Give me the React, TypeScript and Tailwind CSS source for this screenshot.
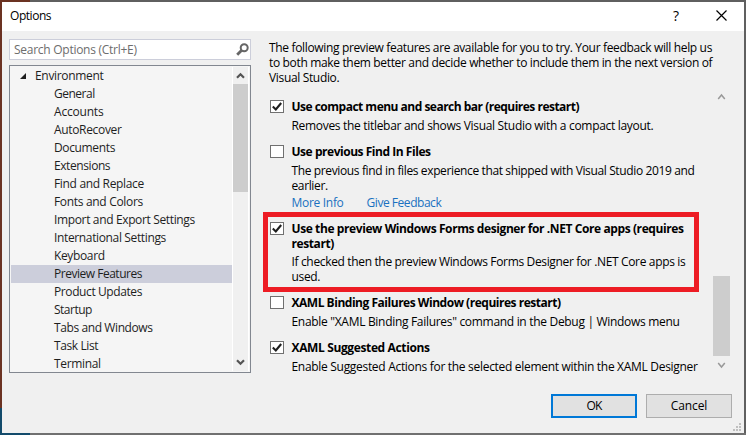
import React from "react";

type Line = { text: string; track: string };

const tree: Line[] = [
  { text: "General", track: "tracking-[-0.5px]" },
  { text: "Accounts", track: "tracking-[-0.2px]" },
  { text: "AutoRecover", track: "tracking-[-0.33px]" },
  { text: "Documents", track: "tracking-[-0.36px]" },
  { text: "Extensions", track: "tracking-[-0.42px]" },
  { text: "Find and Replace", track: "tracking-[-0.33px]" },
  { text: "Fonts and Colors", track: "tracking-[-0.32px]" },
  { text: "Import and Export Settings", track: "tracking-[-0.356px]" },
  { text: "International Settings", track: "tracking-[-0.36px]" },
  { text: "Keyboard", track: "tracking-[-0.36px]" },
  { text: "Preview Features", track: "tracking-[-0.48px]" },
  { text: "Product Updates", track: "tracking-[-0.4px]" },
  { text: "Startup", track: "tracking-[-0.5px]" },
  { text: "Tabs and Windows", track: "tracking-[-0.4px]" },
  { text: "Task List", track: "tracking-[-0.4px]" },
  { text: "Terminal", track: "tracking-[-0.33px]" },
];

type Feature = {
  checked: boolean;
  title: Line;
  body: Line;
  links?: boolean;
  height: string;
  bodyGap: string;
};

const features: Feature[] = [
  {
    checked: true,
    title: { text: "Use compact menu and search bar (requires restart)", track: "tracking-[-0.508px]" },
    body: {
      text: "Removes the titlebar and shows Visual Studio with a compact layout.",
      track: "tracking-[-0.311px]",
    },
    height: "h-[45px]",
    bodyGap: "pt-[4px]",
  },
  {
    checked: false,
    title: { text: "Use previous Find In Files", track: "tracking-[-0.463px]" },
    body: {
      text: "The previous find in files experience that shipped with Visual Studio 2019 and\nearlier.",
      track: "tracking-[-0.369px]",
    },
    links: true,
    height: "h-[77px]",
    bodyGap: "pt-[4px]",
  },
  {
    checked: true,
    title: {
      text: "Use the preview Windows Forms designer for .NET Core apps (requires\nrestart)",
      track: "tracking-[-0.406px]",
    },
    body: {
      text: "If checked then the preview Windows Forms Designer for .NET Core apps is\nused.",
      track: "tracking-[-0.345px]",
    },
    height: "h-[74px]",
    bodyGap: "pt-[3px]",
  },
  {
    checked: false,
    title: { text: "XAML Binding Failures Window (requires restart)", track: "tracking-[-0.475px]" },
    body: {
      text: 'Enable "XAML Binding Failures" command in the Debug | Windows menu',
      track: "tracking-[-0.307px]",
    },
    height: "h-[45px]",
    bodyGap: "pt-[4px]",
  },
  {
    checked: true,
    title: { text: "XAML Suggested Actions", track: "tracking-[-0.369px]" },
    body: {
      text: "Enable Suggested Actions for the selected element within the XAML Designer",
      track: "tracking-[-0.304px]",
    },
    height: "h-[45px]",
    bodyGap: "pt-[4px]",
  },
];

function Text({ line }: { line: Line }) {
  return <p className={`leading-[15px] whitespace-pre ${line.track}`}>{line.text}</p>;
}

function BoldChevron({ down }: { down?: boolean }) {
  return (
    <svg viewBox="0 0 9 7" className="h-[7px] w-[9px]" fill="none" stroke="#555" strokeWidth="2.2">
      <path d={down ? "M1 1.2 4.5 4.7 8 1.2" : "M1 5.8 4.5 2.3 8 5.8"} />
    </svg>
  );
}

function ThinChevron({ down }: { down?: boolean }) {
  return (
    <svg viewBox="0 0 9 7" className="h-[7px] w-[9px]" fill="none" stroke="#999" strokeWidth="1.5">
      <path d={down ? "M1.2 1 4.5 5 7.8 1" : "M1.2 6 4.5 2 7.8 6"} />
    </svg>
  );
}

function CheckBox({ checked }: { checked: boolean }) {
  return (
    <div className="h-[13px] w-[14px] shrink-0 border border-[#707070] bg-white">
      {checked && (
        <svg viewBox="0 0 12 11" className="block h-[11px] w-[12px]" fill="none" stroke="#1e1e1e" strokeWidth="2.1">
          <path d="M1.8 5.6 4.8 8.4 10.2 2" />
        </svg>
      )}
    </div>
  );
}

function FeatureRow({ f }: { f: Feature }) {
  return (
    <div className={`flex gap-[7.5px] ${f.height}`}>
      <div className="pt-px">
        <CheckBox checked={f.checked} />
      </div>
      <div className="min-w-0">
        <div className="font-bold">
          <Text line={f.title} />
        </div>
        <div className={f.bodyGap}>
          <Text line={f.body} />
        </div>
        {f.links && (
          <div className="flex gap-[23px] pt-[2px] leading-[15px] whitespace-nowrap text-[#1a70c0]">
            <a className="tracking-[-0.3px]">More Info</a>
            <a className="tracking-[-0.46px]">Give Feedback</a>
          </div>
        )}
      </div>
    </div>
  );
}

export default function App() {
  return (
    <div className="relative flex h-[435px] w-[746px] flex-col overflow-hidden bg-[#686868] font-['Open_Sans',sans-serif] text-[12px] text-black">
      <div className="flex h-[2px]">
        <div className="w-[30px] bg-[#6b3222]" />
        <div className="flex-1 bg-[#5f5f5f]" />
      </div>
      <div className="flex h-[431px]">
        <div className="flex w-[2px] flex-col">
          <div className="flex-1 bg-[#6b3222]" />
          <div className="h-[25px] bg-[#134b6b]" />
        </div>
        <div className="flex w-[742px] flex-col bg-[#f0f0f0]">
          <header className="flex h-[29px] items-center bg-white pb-[2px] pl-[8px]">
            <span className="pt-px tracking-[-0.45px]">Options</span>
            <span className="ml-auto text-[14px]">?</span>
            <svg viewBox="0 0 11 11" className="mr-[17px] ml-[37px] h-[11px] w-[11px]" stroke="#000" fill="none">
              <path d="M.5.5l10 10M10.5.5l-10 10" strokeWidth="1.2" />
            </svg>
          </header>
          <div className="flex h-[342px] pl-[7px]">
            <div className="w-[242px] pt-[8px]">
              <div className="flex h-[21px] items-center border border-[#ccceda] bg-white pl-[4px] text-[#6d6d6d]">
                <span className="pt-px tracking-[-0.266px]">Search Options (Ctrl+E)</span>
                <svg viewBox="0 0 13 13" className="mr-px ml-auto h-[13px] w-[13px]" fill="none" stroke="#666">
                  <circle cx="8.2" cy="4.8" r="3.5" strokeWidth="2" />
                  <path d="M5.7 7.3 1.2 11.8" strokeWidth="2.8" />
                </svg>
              </div>
              <div className="mt-[5px] flex h-[308px] justify-between border border-[#828790] bg-[#f5f5f5] p-px">
                <div className="w-[221px] text-[#1e1e1e]">
                  <div className="flex h-[18px] items-center">
                    <svg viewBox="0 0 6 6" className="ml-[9px] h-[6px] w-[6px]">
                      <path d="M6 0v6H0z" fill="#1e1e1e" />
                    </svg>
                    <span className="ml-[9px] tracking-[-0.324px]">Environment</span>
                  </div>
                  {tree.map((t) => (
                    <div
                      key={t.text}
                      className={`h-[18px] pl-[43px] leading-[18px] whitespace-nowrap ${t.track} ${
                        t.text === "Preview Features" ? "bg-[#cccedb]" : ""
                      }`}
                    >
                      {t.text}
                    </div>
                  ))}
                </div>
                <div className="flex w-[17px] flex-col items-center border-x border-white bg-[#f0f0f0]">
                  <div className="flex h-[17px] items-center">
                    <BoldChevron />
                  </div>
                  <div className="h-[108px] w-[15px] bg-[#cdcdcd]" />
                  <div className="mt-auto flex h-[17px] items-center">
                    <BoldChevron down />
                  </div>
                </div>
              </div>
            </div>
            <div className="flex w-[493px] flex-col pl-[18px]">
              <div className="pt-[9px]">
                <Text
                  line={{
                    text: "The following preview features are available for you to try. Your feedback will help us\nto both make them better and decide whether to include them in the next version of\nVisual Studio.",
                    track: "tracking-[-0.341px]",
                  }}
                />
              </div>
              <div className="flex pt-[5px]">
                <div className="w-[443px] pt-[9px] pl-px">
                  {features.map((f) => (
                    <FeatureRow key={f.title.text} f={f} />
                  ))}
                </div>
                <div className="flex h-[283px] w-[19px] flex-col items-center pt-[3px]">
                  <ThinChevron />
                  <div className="mt-[176px] h-[80px] w-[17px] bg-[#cdcdcd]" />
                  <div className="mt-[6px]">
                    <ThinChevron down />
                  </div>
                </div>
              </div>
            </div>
          </div>
          <footer className="flex justify-end gap-[9px] pt-[21px] pr-[12px]">
            <button className="h-[24px] w-[86px] border-2 border-[#0078d7] bg-[#e1e1e1] tracking-[-0.8px]">OK</button>
            <button className="h-[24px] w-[86px] border border-[#adadad] bg-[#e1e1e1] tracking-[-0.12px]">
              Cancel
            </button>
          </footer>
          <svg viewBox="0 0 8 8" className="mt-auto mr-[3px] mb-[2px] h-[8px] w-[8px] self-end" fill="#bfbfbf">
            <path d="M6 0h2v2H6zM3 3h2v2H3zM6 3h2v2H6zM0 6h2v2H0zM3 6h2v2H3zM6 6h2v2H6z" />
          </svg>
        </div>
        <div className="w-[2px] bg-[#606060]" />
      </div>
      <div className="flex h-[2px]">
        <div className="w-[30px] bg-[#134b6b]" />
        <div className="flex-1 bg-[#707070]" />
      </div>
      <div className="absolute top-[212px] left-[263px] h-[80px] w-[436px] border-5 border-[#ed1c24]" />
    </div>
  );
}
